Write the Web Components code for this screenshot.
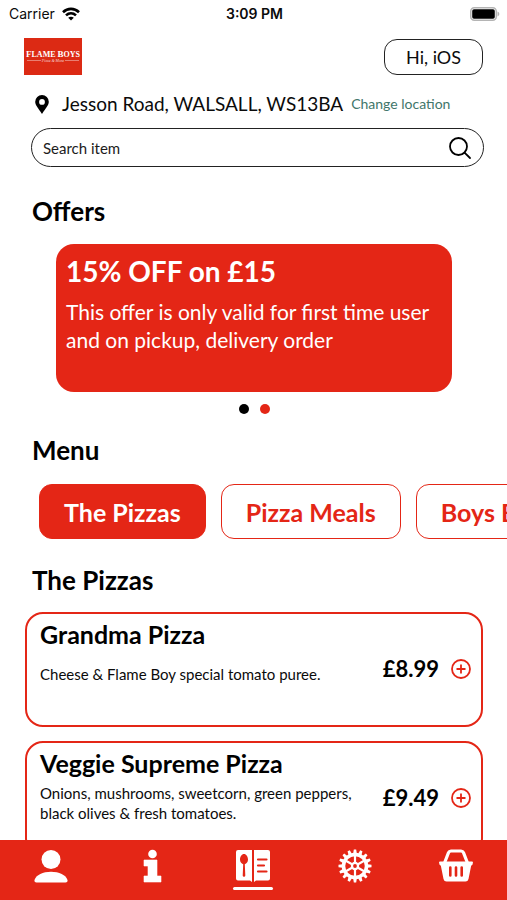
<!DOCTYPE html>
<html lang="en">
<head>
<meta charset="utf-8">
<meta name="viewport" content="width=device-width, initial-scale=1">
<title>Flame Boys</title>
<style>
  html, body { height: 100%; margin: 0; }
  body {
    --red: #e42616;
    --ink: #0b0b0b;
    background: #fff;
    color: var(--ink);
    font-family: Lato, "Liberation Sans", sans-serif;
  }
</style>
</head>
<body>
<flame-app>
  <status-bar slot="top" carrier="Carrier" time="3:09 PM"></status-bar>
  <app-header slot="top">Hi, iOS</app-header>
  <location-row>Jesson Road, WALSALL, WS13BA</location-row>
  <search-box></search-box>
  <page-section heading="Offers">
    <offer-carousel>
      <offer-card heading="15% OFF on £15">This offer is only valid for first time user and on pickup, delivery order</offer-card>
    </offer-carousel>
  </page-section>
  <page-section heading="Menu">
    <category-tabs>
      <category-tab active>The Pizzas</category-tab>
      <category-tab>Pizza Meals</category-tab>
      <category-tab>Boys Burgers</category-tab>
    </category-tabs>
  </page-section>
  <page-section heading="The Pizzas">
    <menu-list>
      <menu-item name="Grandma Pizza" price="£8.99">Cheese &amp; Flame Boy special tomato puree.</menu-item>
      <menu-item name="Veggie Supreme Pizza" price="£9.49">Onions, mushrooms, sweetcorn, green peppers, black olives &amp; fresh tomatoes.</menu-item>
    </menu-list>
  </page-section>
  <bottom-nav slot="bottom"></bottom-nav>
</flame-app>

<script>
const define = (name, render) => customElements.define(name, class extends HTMLElement {
  constructor() {
    super();
    this.attachShadow({ mode: 'open' });
  }
  connectedCallback() {
    this.shadowRoot.innerHTML = '<style>*{box-sizing:border-box}:host{box-sizing:border-box}button{font:inherit;color:inherit;cursor:pointer}</style>' + render(this);
  }
});

define('flame-app', () => `
  <style>
    :host { display: flex; flex-direction: column; height: 100vh; overflow: hidden; }
    main { flex: 1; min-height: 0; overflow-x: hidden; overflow-y: auto; scrollbar-width: none; }
  </style>
  <slot name="top"></slot>
  <main><slot></slot></main>
  <slot name="bottom"></slot>`);

define('status-bar', el => `
  <style>
    :host { display: grid; grid-template-columns: 1fr auto 1fr; align-items: center; height: 28px;
            padding: 0 7px 0 9px; font: 14px/20px Inter, "Liberation Sans", sans-serif; flex: none; }
    .left { display: flex; align-items: center; gap: 7px; }
    .time { font-weight: 600; }
    .battery { justify-self: end; }
    svg { display: block; }
  </style>
  <span class="left">${el.getAttribute('carrier')}
    <svg width="18" height="14" viewBox="0 0 18 14" fill="none" stroke="#000" stroke-width="2.6">
      <path d="M1 5.2C5.6.8 12.4.8 17 5.2"/><path d="M4 8.4c2.9-2.7 7.1-2.7 10 0"/>
      <path d="M9 13.6L6.2 10.8c1.6-1.4 4-1.4 5.6 0z" fill="#000" stroke="none"/>
    </svg>
  </span>
  <span class="time">${el.getAttribute('time')}</span>
  <svg class="battery" width="30" height="14" viewBox="0 0 30 14">
    <rect x=".75" y=".75" width="25.5" height="12.5" rx="3.5" fill="#fff" stroke="#b4b4b4" stroke-width="1.5"/>
    <rect x="2.2" y="2.2" width="22.6" height="9.6" rx="1.8"/>
    <path d="M27.5 4.6c2.4.8 2.4 4 0 4.8z" fill="#b4b4b4"/>
  </svg>`);

define('app-header', () => `
  <style>
    :host { display: flex; justify-content: space-between; align-items: center; padding: 10px 24px 0; flex: none; }
    svg { display: block; }
    button { height: 36px; padding: 0 21px; border: 1px solid #222; border-radius: 13px; background: #fff; font-size: 18px; line-height: 24px; }
  </style>
  <svg width="58" height="37" viewBox="0 0 58 37" role="img" aria-label="Flame Boys">
    <rect width="58" height="37" fill="#dc2a14"/>
    <g fill="#fff" font-family="'Liberation Serif', serif" font-weight="700" text-anchor="middle">
      <text x="29" y="19" font-size="8"><tspan font-size="9">F</tspan>LAME <tspan font-size="9">B</tspan>OYS</text>
      <text x="29" y="24" font-size="4" font-style="italic" font-weight="400" opacity=".8">Pizza &amp; More</text>
    </g>
    <path d="M3 22.500h14M41 22.500h14" stroke="#fff" stroke-width=".5" opacity=".8"/>
  </svg>
  <button type="button"><slot></slot></button>`);

define('location-row', () => `
  <style>
    :host { display: flex; align-items: center; padding: 17px 24px 0 35px; line-height: 24px; font-size: 19px; white-space: nowrap; }
    svg { flex: none; margin-right: 13px; }
    a { margin-left: 8px; font-size: 14px; color: #41766a; text-decoration: none; }
  </style>
  <svg width="14" height="19" viewBox="0 0 14 19"><path fill-rule="evenodd" d="M7 0a6.8 6.8 0 0 0-6.8 6.8C.2 10 3 13 7 19c4-6 6.800-9 6.800-12.200A6.800 6.800 0 0 0 7 0zm0 4a2.900 2.900 0 1 1 0 5.800A2.900 2.900 0 0 1 7 4z"/></svg>
  <span><slot></slot></span>
  <a href="#location">Change location</a>`);

define('search-box', () => `
  <style>
    :host { display: block; padding: 12px 23px 8px 31px; }
    form { display: flex; align-items: center; height: 39px; padding: 0 11px; border: 1px solid #222; border-radius: 20px; }
    input { flex: 1; min-width: 0; padding: 0; border: 0; outline: 0; background: none; font: inherit; font-size: 15px; color: inherit; }
    input::placeholder { color: #1c1c1c; opacity: 1; }
    button { padding: 0; border: 0; background: none; }
    svg { display: block; }
  </style>
  <form role="search" onsubmit="return false">
    <input type="search" placeholder="Search item" aria-label="Search item">
    <button type="submit" aria-label="Search">
      <svg width="24" height="24" viewBox="0 0 24 24" fill="none" stroke="#000" stroke-width="1.800" stroke-linecap="round"><circle cx="10.500" cy="10.500" r="8.500"/><path d="M16.800 16.800l5.200 5.200"/></svg>
    </button>
  </form>`);

define('page-section', el => `
  <style>
    :host { display: block; padding-top: 19px; }
    h2 { margin: 0; padding: 0 32px; font-size: 26px; line-height: 34px; font-weight: 700; color: #000; }
  </style>
  <h2>${el.getAttribute('heading')}</h2>
  <slot></slot>`);

define('offer-carousel', () => `
  <style>
    :host { display: block; padding: 16px 55px 0 56px; }
    .dots { display: flex; justify-content: center; gap: 11px; padding-top: 12px; }
    button { width: 10px; height: 10px; padding: 0; border: 0; border-radius: 50%; background: #000; }
    .on { background: var(--red); }
  </style>
  <slot></slot>
  <div class="dots"><button type="button" aria-label="Offer 1"></button><button type="button" class="on" aria-label="Offer 2" aria-current="true"></button></div>`);

define('offer-card', el => `
  <style>
    :host { display: block; min-height: 148px; padding: 10px; border-radius: 18px; background: var(--red); color: #fff; }
    h3 { margin: 0 0 10px; font-size: 28px; line-height: 34px; font-weight: 700; }
    p { margin: 0; font-size: 21px; line-height: 28px; }
  </style>
  <h3>${el.getAttribute('heading')}</h3><p><slot></slot></p>`);

define('category-tabs', () => `
  <style>
    :host { display: flex; gap: 15px; padding: 17px 0 5px 39px; overflow-x: auto; scrollbar-width: none; }
  </style>
  <slot></slot>`);

define('category-tab', el => `
  <style>
    :host { display: block; flex: none; }
    button { display: block; height: 55px; padding: 0 24px; border: 1px solid var(--red); border-radius: 13px;
             background: #fff; color: var(--red); font-size: 25px; font-weight: 700; white-space: nowrap; }
    :host([active]) button { background: var(--red); color: #fff; }
  </style>
  <button type="button" aria-pressed="${el.hasAttribute('active')}"><slot></slot></button>`);

define('menu-list', () => `
  <style>:host { display: flex; flex-direction: column; gap: 14px; padding: 15px 24px 16px 25px; }</style>
  <slot></slot>`);

define('menu-item', el => `
  <style>
    :host { display: grid; grid-template-columns: 1fr auto auto; grid-template-rows: 32px 48px; column-gap: 12px;
            min-height: 115px; padding: 4px 10px 0 13px; border: 2px solid var(--red); border-radius: 18px; align-items: center; align-content: start; }
    h3 { margin: 0; font-size: 25px; line-height: 32px; font-weight: 700; color: #000; grid-column: 1 / -1; white-space: nowrap; }
    p { margin: 0; font-size: 15px; line-height: 20px; }
    .price { font-size: 22px; line-height: 30px; font-weight: 700; color: #000; padding-bottom: 10px; }
    button { padding: 0 0 10px; border: 0; background: none; }
    svg { display: block; }
  </style>
  <h3>${el.getAttribute('name')}</h3>
  <p><slot></slot></p>
  <span class="price">${el.getAttribute('price')}</span>
  <button type="button" aria-label="Add ${el.getAttribute('name')}">
    <svg width="20" height="20" viewBox="0 0 20 20" fill="none" stroke="#e42616" stroke-width="1.800"><circle cx="10" cy="10" r="9"/><path d="M10 5.500v9M5.500 10h9"/></svg>
  </button>`);

const gearTeeth = Array.from({ length: 16 }, (_, i) => `<path d="M15.200 4.500L15.800.5h2.400l.6 4z" transform="rotate(${i * 22.5} 17 17)"/>`).join('');
const spokes = Array.from({ length: 6 }, (_, i) => `<path d="M17 17V6" transform="rotate(${i * 60} 17 17)"/>`).join('');

define('bottom-nav', () => `
  <style>
    :host { display: block; flex: none; background: var(--red); }
    nav { display: grid; grid-template-columns: repeat(5, 1fr); height: 60px; }
    a { display: flex; flex-direction: column; align-items: center; padding-top: 9px; }
    .on::after { content: ""; width: 40px; height: 3px; margin-top: 4px; border-radius: 2px; background: #fff; }
    svg { display: block; flex: none; }
  </style>
  <nav>
    <a href="#account" aria-label="Account"><svg width="34" height="34" viewBox="0 0 34 34" fill="#fff"><circle cx="17" cy="10.500" r="9.500"/><path d="M.5 31C2 26 9 22.800 17 22.800S32 26 33.500 31c.3 1.500-.4 2.500-2 2.500h-29C.9 33.500.2 32.500.5 31z"/></svg></a>
    <a href="#info" aria-label="Information"><svg width="34" height="34" viewBox="0 0 34 34" fill="#fff"><circle cx="17.500" cy="5" r="4.300"/><path d="M9 11h13v16h4v6H9v-6h4V17H9z" stroke="#fff" stroke-width=".6" stroke-linejoin="round"/></svg></a>
    <a class="on" href="#menu" aria-label="Menu" aria-current="page"><svg width="36" height="34" viewBox="0 0 36 34" fill="#fff"><path fill-rule="evenodd" d="M3 1h14v32l-2-1.500H3a2 2 0 0 1-2-2V3a2 2 0 0 1 2-2zm6 4C6.800 5 5 7.500 5 10.500c0 2.500 1.400 4 3.200 4.800L7.700 26.500a1.300 1.300 0 0 0 2.600 0L9.800 15.300C11.600 14.500 13 13 13 10.500 13 7.500 11.200 5 9 5z"/><path d="M19 1h14a2 2 0 0 1 2 2v26.500a2 2 0 0 1-2 2H21L19 33z"/><path d="M23 10.500h8.500M23 16.500h6M23 22.500h8.500" stroke="#e42616" stroke-width="2.200" stroke-linecap="round"/></svg></a>
    <a href="#settings" aria-label="Settings"><svg width="34" height="34" viewBox="0 0 34 34" fill="#fff">${gearTeeth}<circle cx="17" cy="17" r="11.500" fill="none" stroke="#fff" stroke-width="3.500"/><g stroke="#fff" stroke-width="2.200">${spokes}</g><circle cx="17" cy="17" r="4.200"/><circle cx="17" cy="17" r="1.900" fill="#e42616"/></svg></a>
    <a href="#basket" aria-label="Basket"><svg width="34" height="34" viewBox="0 0 34 34"><path d="M5.500 14L9.500 3.600Q10.200 2 12 2h10q1.800 0 2.500 1.600L28.500 14" fill="none" stroke="#fff" stroke-width="3.200"/><path d="M1 12.500h32q1.200 0 .9 1.200l-.4 1.800q-.3 1-1.300 1L29.500 30q-.6 2.500-3 2.500h-19q-2.400 0-3-2.500L1.800 16.500q-1 0-1.300-1l-.4-1.800Q-.2 12.500 1 12.500z" fill="#fff"/><path d="M11.300 18.500v8M17 18.500v8M22.700 18.500v8" stroke="#e42616" stroke-width="2.600" stroke-linecap="round"/></svg></a>
  </nav>`);
</script>
</body>
</html>
